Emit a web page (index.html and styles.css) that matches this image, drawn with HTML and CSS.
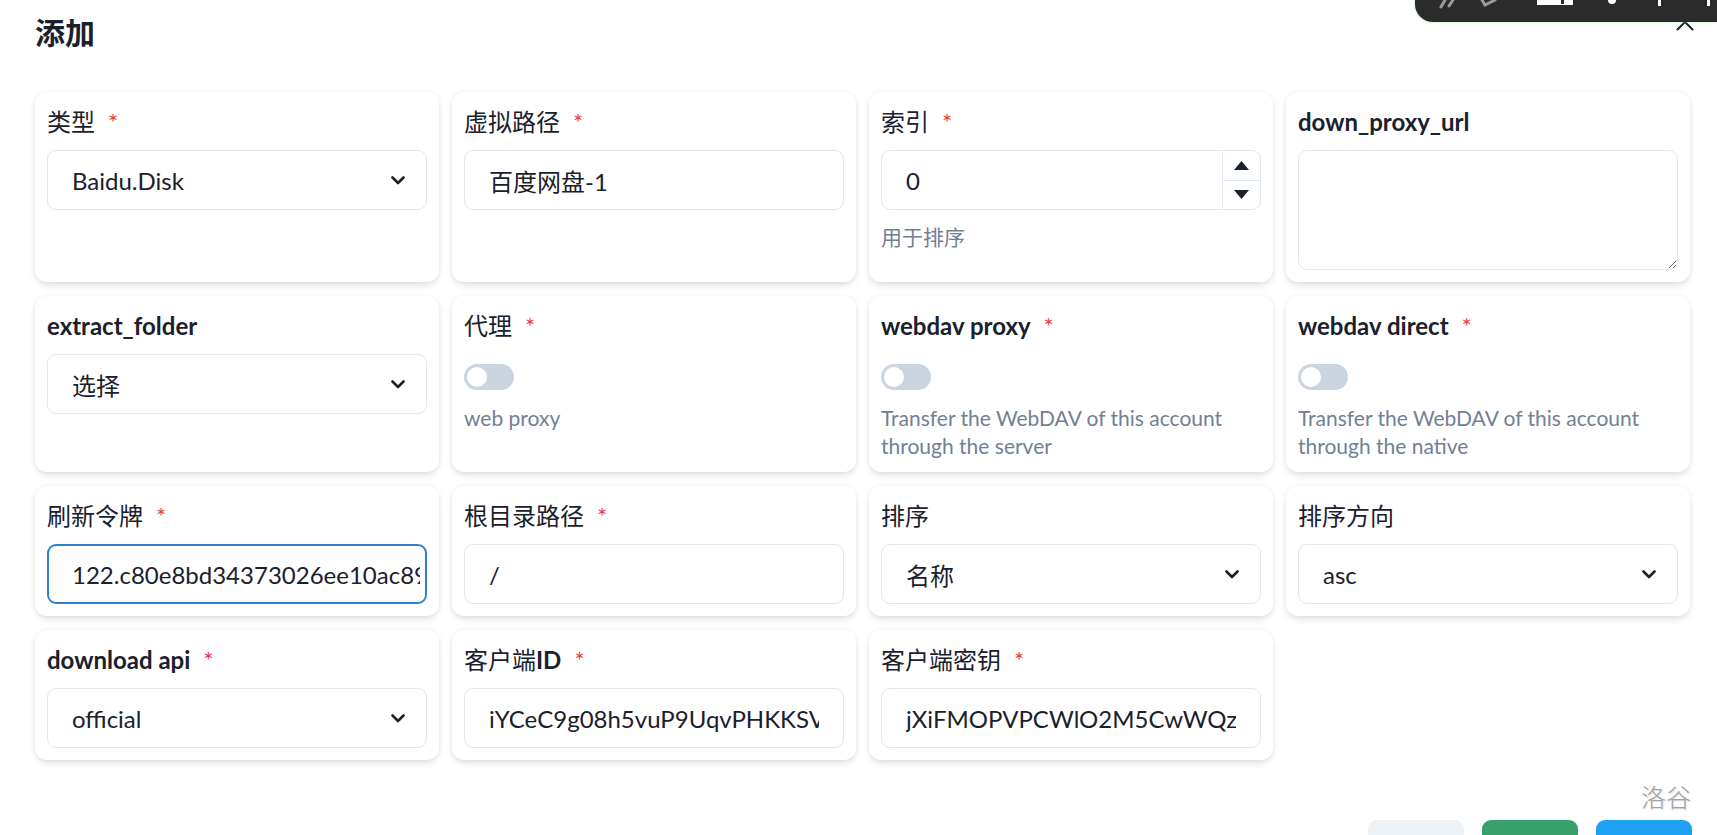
FILE: index.html
```html
<!DOCTYPE html>
<html lang="zh-CN">
<head>
<meta charset="utf-8">
<title>添加</title>
<link rel="stylesheet" href="styles.css">
</head>
<body>
<div class="modal">
  <header class="modal-header">
    <h2 class="title">添加</h2>
    <button class="close" aria-label="close">
      <svg width="18" height="18" viewBox="0 0 18 18"><path d="M1.5 1.5 L16.5 16.5 M16.5 1.5 L1.5 16.5" stroke="#1a202c" stroke-width="2" stroke-linecap="round"/></svg>
    </button>
  </header>

  <div class="grid">
    <div class="card">
      <div class="label">类型<span class="req">*</span></div>
      <div class="select"><span>Baidu.Disk</span><svg class="chev" width="14" height="9" viewBox="0 0 14 9"><path d="M1.5 1.5 L7 7 L12.5 1.5" fill="none" stroke="#1a202c" stroke-width="2.6" stroke-linecap="round" stroke-linejoin="round"/></svg></div>
    </div>
    <div class="card">
      <div class="label">虚拟路径<span class="req">*</span></div>
      <input class="input" type="text" value="百度网盘-1">
    </div>
    <div class="card">
      <div class="label">索引<span class="req">*</span></div>
      <div class="number">
        <span class="num-value">0</span>
        <div class="stepper">
          <div class="step"><svg width="15" height="9" viewBox="0 0 15 9"><path d="M7.5 0 L15 9 L0 9 Z" fill="#1a202c"/></svg></div>
          <div class="step step-down"><svg width="15" height="9" viewBox="0 0 15 9"><path d="M0 0 L15 0 L7.5 9 Z" fill="#1a202c"/></svg></div>
        </div>
      </div>
      <div class="hint">用于排序</div>
    </div>
    <div class="card">
      <div class="label bold">down_proxy_url</div>
      <textarea class="textarea"></textarea>
    </div>

    <div class="card">
      <div class="label bold">extract_folder</div>
      <div class="select"><span>选择</span><svg class="chev" width="14" height="9" viewBox="0 0 14 9"><path d="M1.5 1.5 L7 7 L12.5 1.5" fill="none" stroke="#1a202c" stroke-width="2.6" stroke-linecap="round" stroke-linejoin="round"/></svg></div>
    </div>
    <div class="card">
      <div class="label">代理<span class="req">*</span></div>
      <div class="switch"><span class="knob"></span></div>
      <div class="hint hint-sw">web proxy</div>
    </div>
    <div class="card">
      <div class="label bold">webdav proxy<span class="req">*</span></div>
      <div class="switch"><span class="knob"></span></div>
      <div class="hint hint-sw">Transfer the WebDAV of this account through the server</div>
    </div>
    <div class="card">
      <div class="label bold">webdav direct<span class="req">*</span></div>
      <div class="switch"><span class="knob"></span></div>
      <div class="hint hint-sw">Transfer the WebDAV of this account through the native</div>
    </div>

    <div class="card">
      <div class="label">刷新令牌<span class="req">*</span></div>
      <input class="input focus" type="text" value="122.c80e8bd34373026ee10ac89f4d2a6b1e.YHk0dB3n">
    </div>
    <div class="card">
      <div class="label">根目录路径<span class="req">*</span></div>
      <input class="input" type="text" value="/">
    </div>
    <div class="card">
      <div class="label">排序</div>
      <div class="select"><span>名称</span><svg class="chev" width="14" height="9" viewBox="0 0 14 9"><path d="M1.5 1.5 L7 7 L12.5 1.5" fill="none" stroke="#1a202c" stroke-width="2.6" stroke-linecap="round" stroke-linejoin="round"/></svg></div>
    </div>
    <div class="card">
      <div class="label">排序方向</div>
      <div class="select"><span>asc</span><svg class="chev" width="14" height="9" viewBox="0 0 14 9"><path d="M1.5 1.5 L7 7 L12.5 1.5" fill="none" stroke="#1a202c" stroke-width="2.6" stroke-linecap="round" stroke-linejoin="round"/></svg></div>
    </div>

    <div class="card">
      <div class="label bold">download api<span class="req">*</span></div>
      <div class="select"><span>official</span><svg class="chev" width="14" height="9" viewBox="0 0 14 9"><path d="M1.5 1.5 L7 7 L12.5 1.5" fill="none" stroke="#1a202c" stroke-width="2.6" stroke-linecap="round" stroke-linejoin="round"/></svg></div>
    </div>
    <div class="card">
      <div class="label">客户端<span class="semi">ID</span><span class="req">*</span></div>
      <input class="input" type="text" value="iYCeC9g08h5vuP9UqvPHKKSVrKFXGa1v">
    </div>
    <div class="card">
      <div class="label">客户端密钥<span class="req">*</span></div>
      <input class="input" type="text" value="jXiFMOPVPCWlO2M5CwWQzffpNPaGTRBG">
    </div>
  </div>

  <footer class="modal-footer">
    <button class="btn btn-gray"></button>
    <button class="btn btn-green"></button>
    <button class="btn btn-blue"></button>
  </footer>
</div>

<div class="watermark">洛谷</div>

<div class="topbar">
  <svg width="302" height="22" viewBox="0 0 302 22">
    <path d="M30 0 L26 7 M38 0 L34 6" stroke="#9a9a9a" stroke-width="3" stroke-linecap="round"/>
    <path d="M67 0 L70 5 L80 0" stroke="#9a9a9a" stroke-width="3" fill="none" stroke-linecap="round"/>
    <path d="M122 0 H158 V5 H122 Z" fill="#ffffff"/>
    <rect x="146" y="0" width="3" height="4" fill="#2b2b2b"/>
    <circle cx="197" cy="0" r="4" fill="#ffffff"/>
    <rect x="243" y="0" width="3" height="6" fill="#ffffff"/>
    <rect x="292" y="0" width="3" height="6" fill="#ffffff"/>
  </svg>
</div>
</body>
</html>
```

FILE: styles.css
```css
html, body {
  margin: 0;
  padding: 0;
  overflow: hidden;
  background: #ffffff;
}

body {
  font-family: Lato, "Noto Sans CJK SC", sans-serif;
  color: #1a202c;
  width: 1717px;
  height: 835px;
  position: relative;
}

.modal-header {
  display: flex;
  justify-content: space-between;
  align-items: flex-start;
  box-sizing: border-box;
  height: 92px;
  padding: 10px 23px 0 35px;
}

.title {
  margin: 0;
  font-size: 30px;
  font-weight: 700;
  line-height: 45px;
  color: #1a202c;
}

.close {
  margin-top: 3px;
  padding: 0;
  border: none;
  background: transparent;
  width: 18px;
  height: 18px;
  display: flex;
}

.grid {
  display: grid;
  grid-template-columns: repeat(4, 404px);
  column-gap: 13px;
  row-gap: 14px;
  padding: 0 27px 0 35px;
}

.card {
  background: #ffffff;
  border-radius: 12px;
  padding: 12px;
  box-shadow: 0 4px 9px -2px rgba(0, 0, 0, 0.15), 0 0 5px rgba(0, 0, 0, 0.05);
  display: flex;
  flex-direction: column;
}

.label {
  display: flex;
  align-items: center;
  height: 36px;
  font-size: 24px;
  line-height: 36px;
  margin-bottom: 10px;
  color: #1a202c;
  white-space: nowrap;
}

.label.bold {
  font-weight: 700;
}

.semi {
  font-weight: 700;
}

.req {
  color: #e53e3e;
  margin-left: 13px;
  font-weight: 400;
}

.select,
.input,
.number {
  box-sizing: border-box;
  height: 60px;
  width: 100%;
  border: 1px solid #e2e8f0;
  border-radius: 9px;
  background: #ffffff;
  font-family: inherit;
  font-size: 24px;
  color: #1a202c;
}

.select {
  display: flex;
  align-items: center;
  justify-content: space-between;
  padding: 0 21px 0 24px;
}

.input {
  padding: 0 24px;
  outline: none;
  margin: 0;
}

.input.focus {
  border: 2px solid #3182ce;
  padding: 0 5px 0 23px;
}

.number {
  display: flex;
  align-items: stretch;
  padding-left: 24px;
}

.num-value {
  flex: 1;
  display: flex;
  align-items: center;
}

.stepper {
  width: 37px;
  border-left: 1px solid #e2e8f0;
  display: flex;
  flex-direction: column;
}

.step {
  flex: 1;
  display: flex;
  align-items: center;
  justify-content: center;
}

.step-down {
  border-top: 1px solid #e2e8f0;
}

.textarea {
  box-sizing: border-box;
  width: 100%;
  height: 120px;
  border: 1px solid #e2e8f0;
  border-radius: 9px;
  margin: 0;
  padding: 10px 24px;
  font-family: inherit;
  font-size: 24px;
  outline: none;
  resize: vertical;
}

.switch {
  box-sizing: border-box;
  width: 50px;
  height: 26px;
  border-radius: 13px;
  background: #cbd5e0;
  padding: 3px;
  margin-top: 10px;
  display: flex;
}

.knob {
  width: 20px;
  height: 20px;
  border-radius: 50%;
  background: #ffffff;
}

.hint {
  margin-top: 13px;
  font-size: 21px;
  line-height: 28px;
  color: #718096;
}

.hint-sw {
  margin-top: 14px;
}

.modal-footer {
  display: flex;
  justify-content: flex-end;
  gap: 18px;
  padding: 60px 25px 0 0;
}

.btn {
  width: 96px;
  height: 60px;
  border: none;
  border-radius: 9px;
  padding: 0;
}

.btn-gray { background: #edf2f7; }
.btn-green { background: #38a169; }
.btn-blue { background: #1da1f2; }

.watermark {
  position: absolute;
  left: 1641px;
  top: 780px;
  font-size: 25px;
  line-height: 34px;
  font-weight: 300;
  color: #a0a0a0;
  text-shadow: 1px 1px 0 #e4e4e4;
}

.topbar {
  position: absolute;
  top: 0;
  right: 0;
  width: 302px;
  height: 22px;
  background: #2b2b2b;
  border-bottom-left-radius: 18px;
  box-shadow: 0 0 3px rgba(110, 210, 100, 0.55);
  overflow: hidden;
}

.topbar svg {
  display: block;
}
```
